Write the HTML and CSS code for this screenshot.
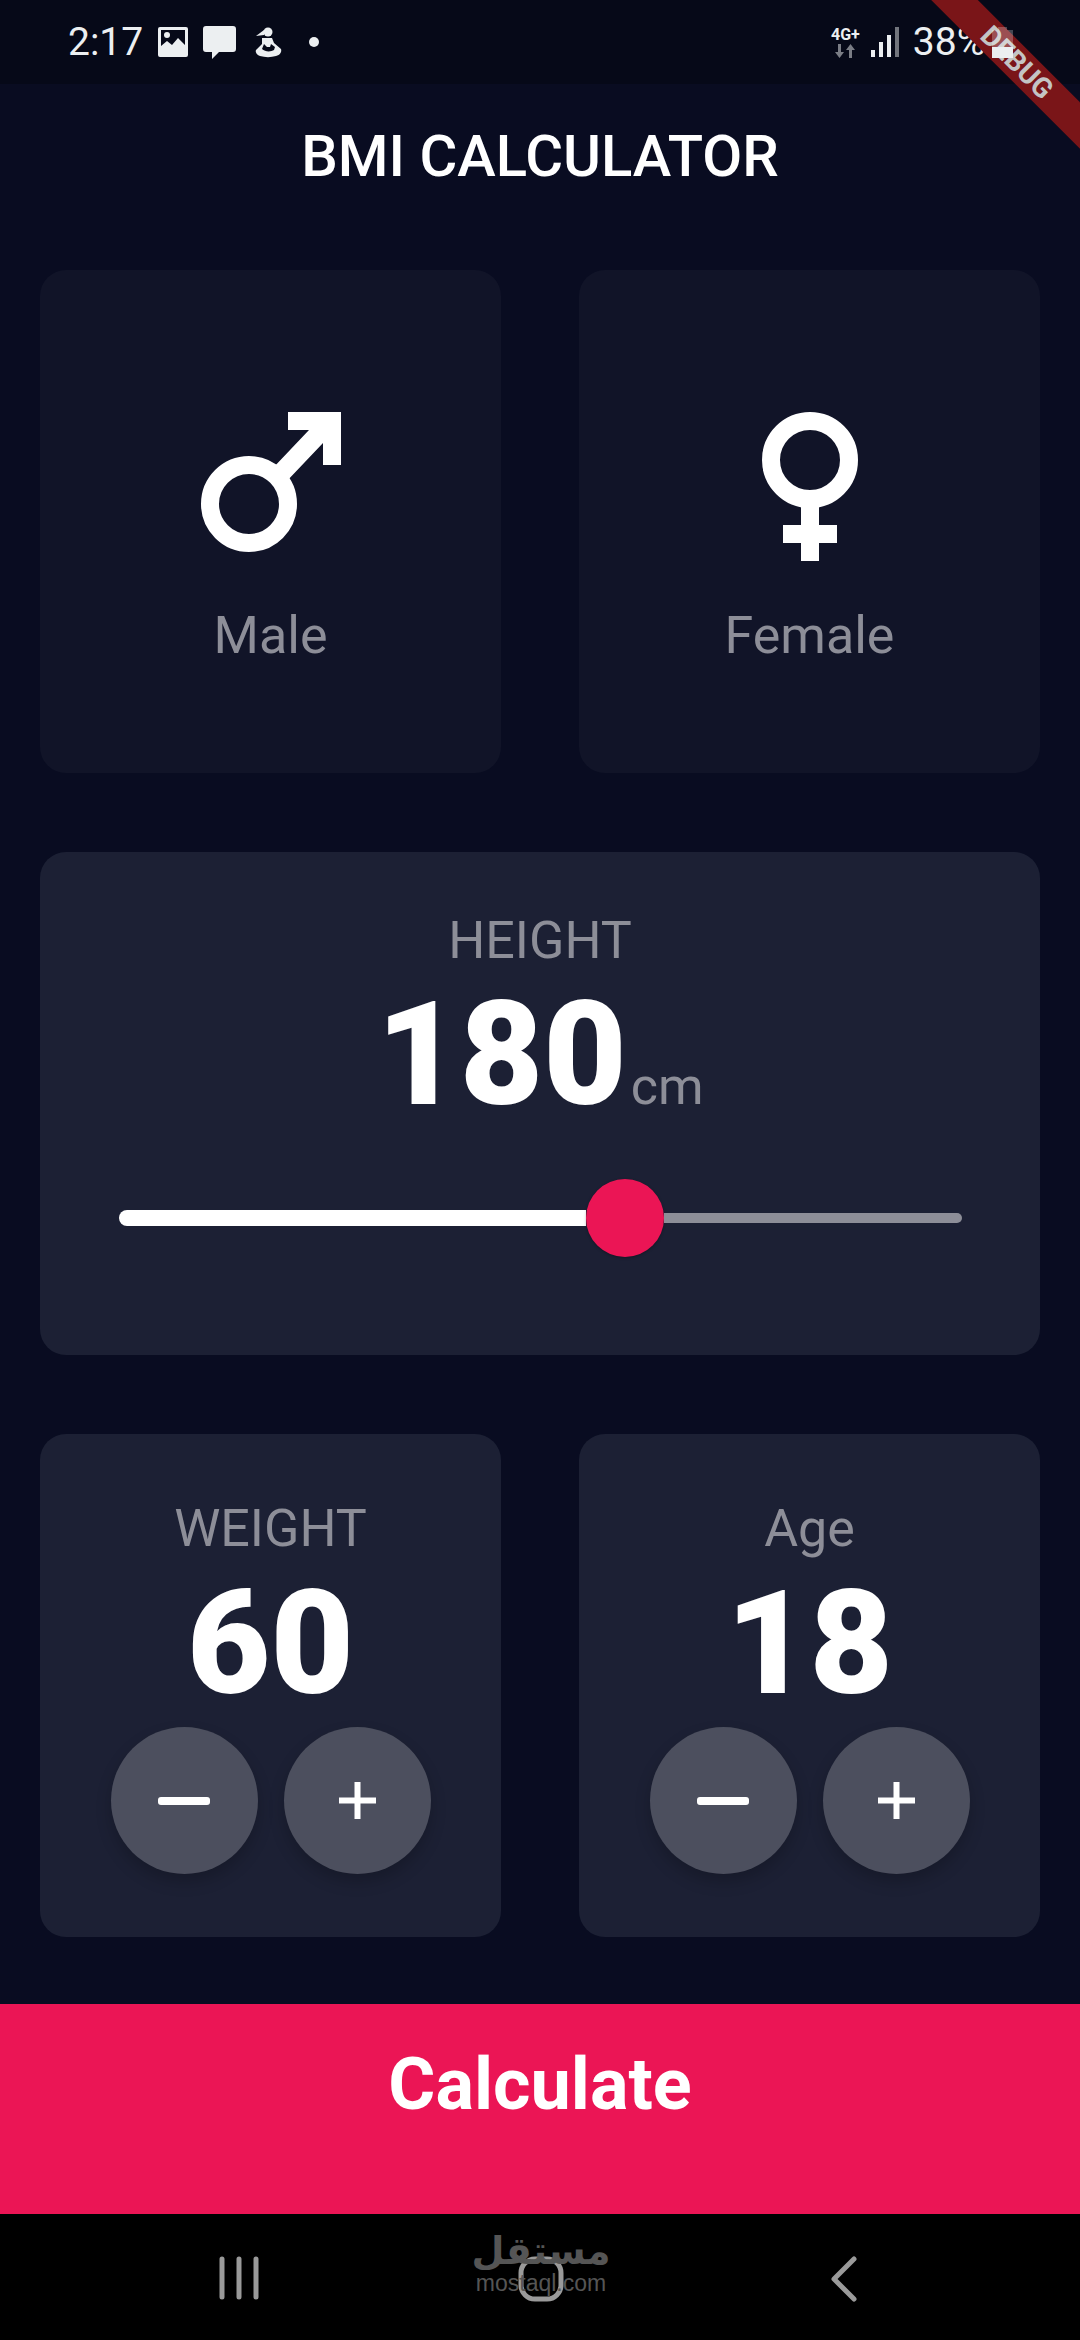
FILE: index.html
```html
<!DOCTYPE html>
<html lang="en">
<head>
  <meta charset="UTF-8" />
  <meta name="viewport" content="width=device-width, initial-scale=1.0"/>
  <title>BMI Calculator</title>
  <link rel="stylesheet" href="styles.css">
</head>
<body>
  <div class="statusBar">
    <div class="statusLeft">
      <span class="statusTime">2:17</span>
      <svg class="iconImage" width="30" height="30" viewBox="0 0 30 30">
        <path fill="#eceff1" fill-rule="evenodd" d="M2 0h26a2 2 0 0 1 2 2v26a2 2 0 0 1-2 2H2a2 2 0 0 1-2-2V2a2 2 0 0 1 2-2zM3 3v16l6-5 5 4 6-7 7 7V3z"/>
        <circle cx="9" cy="8" r="3" fill="#eceff1"/>
      </svg>
      <svg class="iconChat" width="33" height="33" viewBox="0 0 33 33">
        <path fill="#eceff1" d="M3 0h27a3 3 0 0 1 3 3v20a3 3 0 0 1-3 3H16l-7 7v-7H3a3 3 0 0 1-3-3V3a3 3 0 0 1 3-3z"/>
      </svg>
      <svg class="iconFigure" width="27" height="31" viewBox="0 0 27 31">
        <circle cx="13" cy="5" r="4.500" fill="#eceff1"/>
        <path fill="#eceff1" d="M9 3 1 9l8-1z"/>
        <path fill="#eceff1" fill-rule="evenodd" d="M7 11h10l2 5 7 6c1 3-1 6-5 7-5 1.500-11 1.500-16 0-3-1-5-4-4-6l6-6zM9 17l-2 5c3 3 9 3 12 1l1-3-4-3-1 3H12z"/>
      </svg>
      <span class="statusDot"></span>
    </div>
    <div class="statusRight">
      <div class="netType">
        <span class="netLabel">4G+</span>
        <svg width="22" height="14" viewBox="0 0 22 14">
          <path fill="#7a7d85" d="M4 0h3v8h3l-4.500 6L1 8h3z"/>
          <path fill="#7a7d85" d="M15 14h3V6h3l-4.500-6L12 6h3z"/>
        </svg>
      </div>
      <svg class="iconSignal" width="28" height="30" viewBox="0 0 28 30">
        <rect x="0" y="23" width="4" height="7" fill="#eceff1"/>
        <rect x="8" y="15" width="4" height="15" fill="#eceff1"/>
        <rect x="16" y="8" width="4" height="22" fill="#eceff1"/>
        <rect x="24" y="0" width="4" height="30" fill="#72757d"/>
      </svg>
      <span class="statusPercent">38%</span>
    </div>
  </div>

  <header class="appBar">BMI CALCULATOR</header>

  <main class="content">
    <section class="cardRow">
      <div class="card inactive genderCard">
        <svg class="genderIcon" width="140" height="149" viewBox="0 0 140 149">
          <circle cx="48" cy="92" r="39" fill="none" stroke="#fff" stroke-width="18"/>
          <path fill="#fff" d="M87 0h53v53h-18V31L84 71 71 57l37-39H87z"/>
        </svg>
        <span class="label">Male</span>
      </div>
      <div class="card inactive genderCard">
        <svg class="genderIcon" width="96" height="149" viewBox="0 0 96 149">
          <circle cx="48" cy="48" r="39" fill="none" stroke="#fff" stroke-width="18"/>
          <path fill="#fff" d="M39 90h18v23h18v18H57v18H39v-18H21v-18h18z"/>
        </svg>
        <span class="label">Female</span>
      </div>
    </section>

    <section class="card heightCard">
      <span class="label">HEIGHT</span>
      <div class="heightValue">
        <span class="number">180</span>
        <span class="unit">cm</span>
      </div>
      <div class="slider">
        <div class="sliderActive"></div>
        <div class="sliderThumb"></div>
        <div class="sliderRest"></div>
      </div>
    </section>

    <section class="cardRow">
      <div class="card counterCard">
        <span class="label">WEIGHT</span>
        <span class="number">60</span>
        <div class="counterButtons">
          <button class="roundButton"><span class="minusIcon"></span></button>
          <button class="roundButton">
            <svg width="37" height="37" viewBox="0 0 37 37"><path fill="#fff" d="M15.500 0h6v15.500H37v6H21.500V37h-6V21.500H0v-6h15.500z"/></svg>
          </button>
        </div>
      </div>
      <div class="card counterCard">
        <span class="label">Age</span>
        <span class="number">18</span>
        <div class="counterButtons">
          <button class="roundButton"><span class="minusIcon"></span></button>
          <button class="roundButton">
            <svg width="37" height="37" viewBox="0 0 37 37"><path fill="#fff" d="M15.500 0h6v15.500H37v6H21.500V37h-6V21.500H0v-6h15.500z"/></svg>
          </button>
        </div>
      </div>
    </section>
  </main>

  <div class="calculateButton">Calculate</div>

  <nav class="navBar">
    <svg width="40" height="44" viewBox="0 0 40 44">
      <g stroke="#9a9a9a" stroke-width="5" stroke-linecap="round">
        <path d="M3 3v38M20 3v38M37 3v38"/>
      </g>
    </svg>
    <svg class="iconHome" width="46" height="46" viewBox="0 0 46 46">
      <rect x="3" y="3" width="40" height="40" rx="14" fill="none" stroke="#9a9a9a" stroke-width="5"/>
    </svg>
    <svg width="28" height="46" viewBox="0 0 28 46">
      <path d="M24 3 4 23l20 20" fill="none" stroke="#9a9a9a" stroke-width="5" stroke-linecap="round" stroke-linejoin="round"/>
    </svg>
    <div class="watermark">
      <span class="watermarkArabic">مستقل</span>
      <span class="watermarkLatin">mostaql.com</span>
    </div>
  </nav>

  <!-- banner and battery sit on top of the status bar -->
  <div class="bannerClip">
    <div class="debugBanner"><span>DEBUG</span></div>
  </div>
  <svg class="iconBattery" width="21" height="31" viewBox="0 0 21 31">
    <path fill="rgba(255,255,255,0.25)" d="M6 0h9v3h6v17H0V3h6z"/>
    <rect x="0" y="20" width="21" height="11" fill="#eceff1"/>
  </svg>
</body>
</html>
```

FILE: styles.css
```css
* {
  box-sizing: border-box;
}

body {
  position: relative;
  display: flex;
  flex-direction: column;
  width: 1080px;
  height: 2340px;
  margin: 0;
  overflow: hidden;
  background-color: #090c21;
  color: #fff;
  font-family: Roboto, "Liberation Sans", sans-serif;
}

.bannerClip {
  position: absolute;
  top: 0;
  right: 0;
  width: 200px;
  height: 160px;
  overflow: hidden;
}

.debugBanner {
  position: absolute;
  top: 46px;
  left: -13px;
  width: 300px;
  height: 33px;
  display: flex;
  justify-content: center;
  align-items: center;
  background-color: #7a1518;
  transform: rotate(45deg);
  font-size: 28px;
  font-weight: 700;
  color: #c4c4c4;
}

.iconBattery {
  position: absolute;
  top: 27px;
  left: 992px;
}

.statusBar {
  display: flex;
  align-items: center;
  height: 84px;
  padding: 0 0 0 68px;
  background-color: rgba(0, 0, 0, 0.25);
}

.statusLeft,
.statusRight {
  display: flex;
  align-items: center;
}

.statusRight {
  position: absolute;
  top: 0;
  left: 831px;
  height: 84px;
}

.statusTime,
.statusPercent {
  font-size: 39px;
  color: #eceff1;
}

.iconImage {
  margin-left: 15px;
}

.iconChat {
  margin-left: 15px;
}

.iconFigure {
  margin-left: 19px;
}

.statusDot {
  width: 10px;
  height: 10px;
  margin-left: 27px;
  border-radius: 50%;
  background-color: #eceff1;
}

.netType {
  display: flex;
  flex-direction: column;
  align-items: center;
  gap: 2px;
}

.netLabel {
  font-size: 16px;
  line-height: 15px;
  font-weight: 700;
  color: #eceff1;
}

.iconSignal {
  margin-left: 11px;
}

.statusPercent {
  margin-left: 14px;
}

.appBar {
  display: flex;
  justify-content: center;
  align-items: center;
  height: 144px;
  padding-bottom: 1px;
  font-size: 58px;
  font-weight: 500;
}

.content {
  display: flex;
  flex-direction: column;
  gap: 79px;
  padding: 42px 40px 0 40px;
}

.cardRow {
  display: grid;
  grid-template-columns: 461px 461px;
  justify-content: space-between;
}

.card {
  height: 503px;
  border-radius: 26px;
  background-color: #1c2034;
}

.card.inactive {
  background-color: #111428;
}

.label {
  font-size: 52px;
  line-height: 60px;
  color: #8d8e98;
}

.genderCard {
  display: flex;
  flex-direction: column;
  align-items: center;
  padding-top: 142px;
}

.genderIcon {
  margin-bottom: 45px;
}

.heightCard {
  display: flex;
  flex-direction: column;
  align-items: center;
  padding-top: 59px;
}

.heightCard .label {
  margin-bottom: 9px;
}

.counterCard .label {
  margin-bottom: 10px;
}

.number {
  font-size: 144px;
  line-height: 150px;
  font-weight: 900;
}

.heightValue {
  display: flex;
  align-items: baseline;
  gap: 4px;
  height: 150px;
}

.unit {
  font-size: 52px;
  color: #8d8e98;
}

.slider {
  display: flex;
  align-items: center;
  width: 843px;
  margin-top: 49px;
}

.sliderActive {
  width: 467px;
  height: 16px;
  border-radius: 8px 0 0 8px;
  background-color: #fff;
}

.sliderThumb {
  flex: none;
  width: 78px;
  height: 78px;
  border-radius: 50%;
  background-color: #eb1555;
  box-shadow: 0 1px 3px rgba(0, 0, 0, 0.3);
}

.sliderRest {
  flex: 1;
  height: 10px;
  border-radius: 0 5px 5px 0;
  background-color: #8d8e98;
}

.counterCard {
  display: flex;
  flex-direction: column;
  align-items: center;
  padding-top: 65px;
}

.counterButtons {
  display: flex;
  gap: 26px;
  margin-top: 8px;
}

.roundButton {
  display: flex;
  justify-content: center;
  align-items: center;
  width: 147px;
  height: 147px;
  padding: 0;
  border: none;
  border-radius: 50%;
  background-color: #4c4f5e;
  box-shadow: 0 8px 16px rgba(0, 0, 0, 0.2);
}

.minusIcon {
  width: 52px;
  height: 8px;
  border-radius: 3px;
  background-color: #fff;
}

.calculateButton {
  margin-top: 67px;
  height: 210px;
  padding-top: 39px;
  background-color: #eb1555;
  text-align: center;
  font-size: 72px;
  line-height: 84px;
  font-weight: 700;
}

.navBar {
  position: relative;
  flex: 1;
  display: flex;
  justify-content: space-between;
  align-items: flex-start;
  padding: 42px 222px 0 219px;
  background-color: #000;
}

.iconHome {
  margin-right: 7px;
}

.watermark {
  position: absolute;
  top: 14px;
  left: 476px;
  width: 130px;
  display: flex;
  flex-direction: column;
  align-items: center;
  color: #555;
}

.watermarkArabic {
  font-family: "DejaVu Sans", sans-serif;
  font-size: 38px;
  line-height: 46px;
  font-weight: 700;
}

.watermarkLatin {
  font-family: "Liberation Sans", sans-serif;
  font-size: 23px;
  line-height: 18px;
}
```
